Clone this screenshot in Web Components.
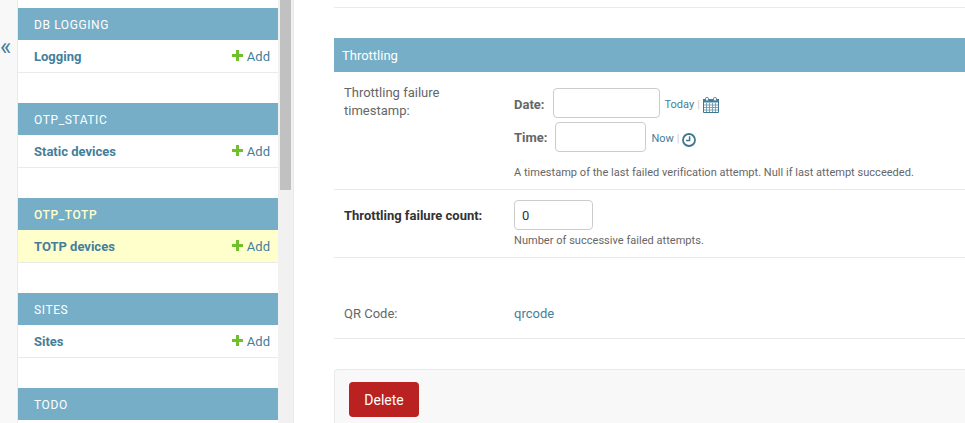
<!DOCTYPE html>
<html><head><meta charset="utf-8">
<style>
html,body{margin:0;padding:0;height:423px;overflow:hidden;background:#fff;font-family:Roboto,"Liberation Sans",sans-serif;font-size:14px;color:#333}
admin-shell{height:423px}
</style></head><body>
<admin-shell>
  <side-bar slot="side">
    <app-module name="DB LOGGING"><model-row label="Logging"></model-row></app-module>
    <app-module name="OTP_STATIC"><model-row label="Static devices"></model-row></app-module>
    <app-module name="OTP_TOTP" current><model-row label="TOTP devices" current></model-row></app-module>
    <app-module name="SITES"><model-row label="Sites"></model-row></app-module>
    <app-module name="TODO"></app-module>
  </side-bar>
  <main-form slot="main"></main-form>
</admin-shell>
<script>
const def=(name,html)=>customElements.define(name,class extends HTMLElement{
  connectedCallback(){ if(this.shadowRoot) return; const r=this.attachShadow({mode:'open'}); r.innerHTML=typeof html==='function'?html(this):html; }
});
def('admin-shell',`<style>
:host{display:flex;overflow:hidden;width:965px}
.toggle{width:17px;flex:none;background:#f8f8f8;border-right:1px solid #eaeaea;color:#447e9b}
.toggle span{display:block;margin-top:35px;font-size:24px;line-height:24px;font-family:Roboto,sans-serif}
.bar{flex:none;background:#f1f1f1;border-right:1px solid #eaeaea;width:15px}
.thumb{margin-left:2px;width:11px;height:190px;background:#c1c1c1}
.side{width:260px;flex:none;height:423px;overflow:hidden}
.main{flex:1;min-width:0;height:423px;overflow:hidden}
</style>
<div class="toggle"><span>«</span></div>
<div class="side"><slot name="side"></slot></div>
<div class="bar"><div class="thumb"></div></div>
<div class="main"><slot name="main"></slot></div>`);
def('side-bar',`<style>:host{display:block;padding-top:8px}</style><slot></slot>`);
def('app-module',h=>`<style>
:host{display:block;margin-bottom:30px}
.cap{height:32px;background:#76aec8;color:${h.hasAttribute('current')?'#ffc':'#fff'};font-size:12px;line-height:34px;letter-spacing:.6px;padding-left:16px;font-weight:${h.hasAttribute('current')?'500':'400'}}
</style><div class="cap">${h.getAttribute('name')}</div><slot></slot>`);
def('add-icon',`<style>:host{display:inline-block;width:11px;height:11px;line-height:0}svg{display:block}</style>
<svg width="11" height="11" viewBox="0 0 11 11"><path fill="#70bf2b" d="M4 0h3v4h4v3H7v4H4V7H0V4h4z"/></svg>`);
def('model-row',h=>`<style>
:host{display:flex;align-items:center;height:32px;border-bottom:1px solid #eaeaea;padding:0 8px 0 16px;background:${h.hasAttribute('current')?'#ffc':'#fff'};font-size:13px}
b{font-weight:700;color:#447e9b;flex:1}
.add{display:flex;align-items:center;color:#447e9b;font-size:13px;gap:4px}
add-icon{margin-top:-2px}
</style><b>${h.getAttribute('label')}</b><span class="add"><add-icon></add-icon>Add</span>`);
def('cal-icon',`<style>:host{display:inline-block;width:16px;height:16px;line-height:0;margin-top:3px}</style>
<svg width="16" height="16" viewBox="0 0 16 16" fill="none" stroke="#417690"><path d="M.5 2.5h15v13H.5z" fill="#fff"/><path fill="#447e9b" stroke="none" d="M0 2h16v3.5H0z"/><path stroke="#6f9bb1" stroke-width=".9" d="M1 8h14M1 10.5h14M1 13h14M3.5 6v9M6.5 6v9M9.5 6v9M12.5 6v9"/><rect x="2.6" y=".5" width="2.8" height="3.4" rx="1" fill="#fff" stroke="#447e9b"/><rect x="10.6" y=".5" width="2.8" height="3.4" rx="1" fill="#fff" stroke="#447e9b"/></svg>`);
def('clock-icon',`<style>:host{display:inline-block;width:14px;height:14px;line-height:0;margin:5px 0 0 -1px}</style>
<svg width="14" height="14" viewBox="0 0 14 14" fill="none" stroke="#417690"><circle cx="7" cy="7" r="6" stroke-width="1.8"/><path stroke-width="1.5" d="M7.6 3.2v4.3H4"/></svg>`);
def('form-row',`<style>
:host{display:flex;border-bottom:1px solid #eaeaea;font-size:13px;padding-left:10px}
.l{width:160px;margin-right:10px;flex:none;color:#666;line-height:18px}
.f{flex:1;min-width:0}
</style><div class="l"><slot name="label"></slot></div><div class="f"><slot></slot></div>`);
def('date-line',h=>`<style>
:host{display:flex;align-items:center;height:30px;font-size:11px;color:#447e9b}
b{font-size:13px;color:#666;font-weight:700;margin-right:8px;position:relative;top:${h.hasAttribute('up')?0:1}px}
i{display:block;box-sizing:border-box;height:30px;width:${h.getAttribute('w')}px;border:1px solid #ccc;border-radius:4px;background:#fff;margin-right:5px}
span{position:relative;top:1px}
s{text-decoration:none;color:#ccc;margin:0 3px 0 3px;position:relative;top:1px}
</style><b>${h.getAttribute('label')}</b><i></i><span>${h.getAttribute('link')}</span><s>|</s><slot></slot>`);
def('main-form',`<style>
:host{display:block;padding:7px 0 0 40px;color:#666}
.top{border-top:1px solid #eaeaea;height:30px}
h2{margin:0;height:34px;background:#76aec8;color:#fff;font-size:13px;font-weight:400;line-height:35px;padding-left:8px}
.r1{height:117px}
.lab1{display:block;padding-top:12px}
.dates{padding-top:16px}
.dates date-line+date-line{margin-top:4px}
.help{font-size:11px;color:#666;line-height:14px;padding-top:14px;letter-spacing:.03px}
.r2{height:67px}
.lab2{display:block;font-weight:700;color:#333;padding-top:17px}
.num{box-sizing:border-box;margin-top:10px;width:79px;height:30px;border:1px solid #ccc;border-radius:4px;padding-left:7px;line-height:29px;color:#333;font-size:13px}
.r2 .help{padding-top:4px}
.r3{height:80px}
.lab3{display:block;padding-top:47px}
.qr{color:#447e9b;padding-top:47px;line-height:18px}
.submit{box-sizing:border-box;margin-top:30px;height:70px;padding:12px 14px;background:#f8f8f8;border:1px solid #eaeaea;border-radius:4px 0 0 4px;border-right:0}
.del{display:flex;align-items:center;justify-content:center;width:70px;height:35px;background:#ba2121;border-radius:4px;color:#fff;font-size:14px;line-height:36px}
</style>
<div class="top"></div>
<h2>Throttling</h2>
<form-row class="r1"><span slot="label" class="lab1">Throttling failure timestamp:</span>
  <div class="dates">
    <date-line label="Date:" w="107" link="Today"><cal-icon></cal-icon></date-line>
    <date-line label="Time:" w="91" link="Now" up><clock-icon></clock-icon></date-line>
  </div>
  <div class="help">A timestamp of the last failed verification attempt. Null if last attempt succeeded.</div>
</form-row>
<form-row class="r2"><span slot="label" class="lab2">Throttling failure count:</span>
  <div class="num">0</div>
  <div class="help">Number of successive failed attempts.</div>
</form-row>
<form-row class="r3"><span slot="label" class="lab3">QR Code:</span><div class="qr">qrcode</div></form-row>
<div class="submit"><div class="del">Delete</div></div>`);
</script>
</body></html>
